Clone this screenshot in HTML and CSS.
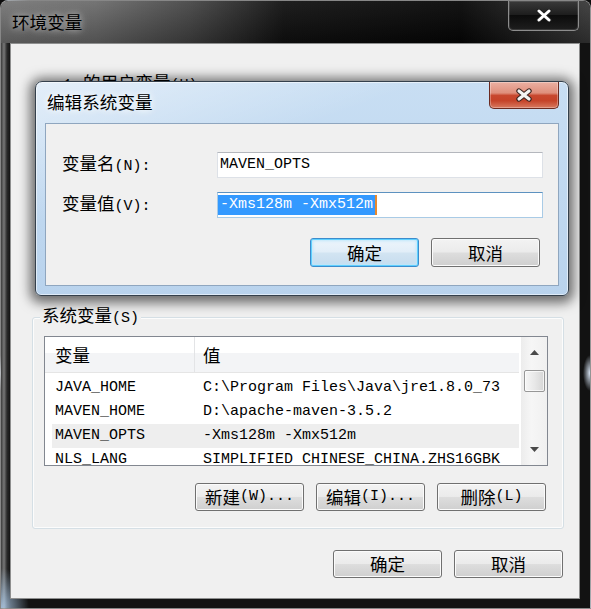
FILE: index.html
```html
<!DOCTYPE html>
<html lang="zh-CN">
<head>
<meta charset="utf-8">
<title>环境变量</title>
<link rel="stylesheet" href="styles.css">
</head>
<body>
<div class="win">
  <div class="wbar">
    <div class="wtitle z">环境变量</div>
    <div class="wclose">
      <svg width="16" height="13" viewBox="0 0 16 13"><path d="M3 2 L13 11 M13 2 L3 11" stroke="#202020" stroke-width="5" stroke-linecap="round"/><path d="M3 2 L13 11 M13 2 L3 11" stroke="#ffffff" stroke-width="3" stroke-linecap="round"/></svg>
    </div>
  </div>
  <div class="client">
    <div class="usersec"><span class="ulabel">1 <span class="z shift">的用户变量</span>(U)</span></div>
    <div class="group">
      <div class="glabel"><span class="z">系统变量</span>(S)</div>
      <div class="list">
        <div class="lmain">
          <div class="lhead">
            <div class="c1"><span class="z">变量</span></div>
            <div class="c2"><span class="z">值</span></div>
          </div>
          <div class="lbody">
            <div class="row"><div class="c1">JAVA_HOME</div><div class="c2">C:\Program Files\Java\jre1.8.0_73</div></div>
            <div class="row"><div class="c1">MAVEN_HOME</div><div class="c2">D:\apache-maven-3.5.2</div></div>
            <div class="row sel"><div class="c1">MAVEN_OPTS</div><div class="c2">-Xms128m -Xmx512m</div></div>
            <div class="row"><div class="c1">NLS_LANG</div><div class="c2">SIMPLIFIED CHINESE_CHINA.ZHS16GBK</div></div>
          </div>
        </div>
        <div class="sbar">
          <svg class="arr" width="9" height="5" viewBox="0 0 9 5"><path d="M0 5 L4.5 0 L9 5 Z" fill="#4a4a4a"/></svg>
          <div class="thumb"></div>
          <svg class="arr down" width="9" height="5" viewBox="0 0 9 5"><path d="M0 0 L4.5 5 L9 0 Z" fill="#4a4a4a"/></svg>
        </div>
      </div>
      <div class="btns">
        <div class="btn"><span class="z">新建</span>(W)...</div>
        <div class="btn"><span class="z">编辑</span>(I)...</div>
        <div class="btn"><span class="z">删除</span>(L)</div>
      </div>
    </div>
    <div class="btns main">
      <div class="btn"><span class="z">确定</span></div>
      <div class="btn"><span class="z">取消</span></div>
    </div>
  </div>
</div>

<div class="dlg">
  <div class="dtitle">
    <div class="dtext z">编辑系统变量</div>
    <div class="dclose">
      <svg width="18" height="14" viewBox="0 0 18 14"><path d="M4 3 L14 11 M14 3 L4 11" stroke="#3a2420" stroke-width="5.4" stroke-linecap="round"/><path d="M4 3 L14 11 M14 3 L4 11" stroke="#f4f4f4" stroke-width="3.2" stroke-linecap="round"/></svg>
    </div>
  </div>
  <div class="dclient">
    <div class="frow">
      <div class="flabel"><span class="z">变量名</span>(N):</div>
      <div class="input">MAVEN_OPTS</div>
    </div>
    <div class="frow second">
      <div class="flabel"><span class="z">变量值</span>(V):</div>
      <div class="input focus"><span class="selt">-Xms128m -Xmx512m</span><span class="caret"></span></div>
    </div>
    <div class="dbtns">
      <div class="btn def"><span class="z">确定</span></div>
      <div class="btn"><span class="z">取消</span></div>
    </div>
  </div>
</div>
</body>
</html>
```

FILE: styles.css
```css
* { box-sizing: border-box; }
html, body { margin: 0; padding: 0; }
body {
  width: 591px;
  height: 609px;
  overflow: hidden;
  position: relative;
  background: #0c0c0c;
  font-family: "Liberation Mono", "Noto Sans CJK SC", monospace;
  font-size: 15px;
  line-height: 20px;
  color: #000;
}
.z {
  font-family: "Noto Sans CJK SC", sans-serif;
  font-size: 17.5px;
  line-height: 20px;
}

/* outer window */
.win {
  width: 591px;
  height: 609px;
  display: flex;
  flex-direction: column;
  border: 1px solid rgba(175, 175, 175, 0.75);
  border-radius: 8px 8px 0 0;
  background:
    radial-gradient(7px 18px at 100% 372px, rgba(225, 238, 255, 0.95), rgba(225, 238, 255, 0)),
    radial-gradient(28px 40px at 0 100%, rgba(175, 205, 235, 0.85), rgba(175, 205, 235, 0)),
    linear-gradient(90deg, #3c3c3c 0, #777 3px, #2a2a2a 6px, #141414 9px, rgba(20, 20, 20, 0) 9px),
    #121212;
}
.wbar {
  height: 42px;
  flex-shrink: 0;
  display: flex;
  align-items: flex-start;
  border-radius: 7px 7px 0 0;
  background:
    linear-gradient(rgba(255, 255, 255, 0.06), rgba(0, 0, 0, 0.25)),
    linear-gradient(90deg, #777 0%, #6c6c6c 16%, #464646 32%, #111 48%, #060606 78%, #1d1d1d 88%, #3a3a3a 100%);
}
.wtitle {
  margin: 11px 0 0 11px;
  font-size: 17.6px;
  text-shadow: 0 0 6px rgba(255, 255, 255, 0.55), 0 0 12px rgba(255, 255, 255, 0.35);
}
.wclose {
  margin-left: auto;
  margin-right: 11px;
  width: 71px;
  height: 30px;
  border: 1px solid #8d8d8d;
  border-top: none;
  border-radius: 0 0 5px 5px;
  background: linear-gradient(#3a3a3a, #1c1c1c 50%, #0c0c0c 50%, #1e1e1e);
  box-shadow: inset 0 0 0 1px rgba(255, 255, 255, 0.12);
  display: flex;
  align-items: center;
  justify-content: center;
}
.client {
  flex: 1;
  margin: 0 10px 9px 9px;
  border: 1px solid #8e8f8f;
  background: #f0f0f0;
  display: flex;
  flex-direction: column;
}
.usersec {
  height: 273px;
  flex-shrink: 0;
  padding: 28px 0 0 52px;
}
.shift { margin-left: 2px; }

/* group box */
.group {
  margin: 0 15px 0 21px;
  border: 1px solid #d5dfe5;
  border-radius: 3px;
  box-shadow: inset 0 0 0 1px rgba(255, 255, 255, 0.8);
}
.glabel {
  width: fit-content;
  height: 20px;
  margin: -13px 0 1px 7px;
  padding: 0 2px;
  background: #f0f0f0;
  white-space: nowrap;
}
.list {
  margin: 11px 15px 0 11px;
  height: 130px;
  border: 1px solid #828790;
  background: #fff;
  display: flex;
}
.lmain {
  flex: 1;
  min-width: 0;
  overflow: hidden;
}
.lhead {
  height: 36px;
  display: flex;
  border-bottom: 1px solid #e5e5e5;
  background: linear-gradient(#fff 0, #fff 45%, #f3f4f6 45%, #f3f4f6 100%);
  margin-right: 2px;
}
.lhead .c1 {
  width: 150px;
  padding-left: 10px;
  border-right: 1px solid #e3e4e6;
  display: flex;
  align-items: center;
}
.lhead .c2 {
  padding-left: 8px;
  display: flex;
  align-items: center;
}
.lbody { padding-top: 3px; }
.row {
  height: 24px;
  margin: 0 2px 0 7px;
  display: flex;
  align-items: center;
  white-space: nowrap;
}
.row .c1 { width: 142px; padding-left: 3px; flex-shrink: 0; }
.row .c2 { padding-left: 9px; }
.row.sel { background: #eeeeee; }

.sbar {
  width: 26px;
  flex-shrink: 0;
  background: linear-gradient(90deg, #ececec, #f6f6f6 40%, #f0f0f0);
  display: flex;
  flex-direction: column;
  align-items: center;
  padding: 13px 0 13px 0;
}
.thumb {
  margin-top: 15px;
  width: 21px;
  height: 22px;
  border: 1px solid #979797;
  border-radius: 2px;
  background: linear-gradient(90deg, #f6f6f6, #e8e8e8 50%, #d6d6d6);
  box-shadow: inset 0 0 0 1px rgba(255, 255, 255, 0.7);
}
.arr { display: block; }
.arr.down { margin-top: auto; }

/* buttons */
.btns {
  display: flex;
  justify-content: flex-end;
  gap: 12px;
  margin: 17px 17px 17px 0;
}
.btns.main { margin: 21px 16px 0 0; }
.btn {
  width: 109px;
  height: 28px;
  border: 1px solid #707070;
  border-radius: 3px;
  background: linear-gradient(#f3f3f3 0%, #ebebeb 48%, #dddddd 52%, #cfcfcf 100%);
  box-shadow: inset 0 0 0 1px #fbfbfb;
  display: flex;
  align-items: center;
  justify-content: center;
  white-space: nowrap;
}

/* edit dialog */
.dlg {
  position: absolute;
  left: 35px;
  top: 81px;
  width: 534px;
  height: 215px;
  border: 1px solid #34404c;
  border-radius: 7px 7px 6px 6px;
  padding: 0 9px 9px 9px;
  display: flex;
  flex-direction: column;
  background:
    linear-gradient(160deg, rgba(255, 255, 255, 0.5) 0%, rgba(255, 255, 255, 0) 35%),
    linear-gradient(#c8def3, #b9d3ed);
  box-shadow: inset 0 0 0 1px rgba(255, 255, 255, 0.55), 0 2px 12px 5px rgba(0, 0, 0, 0.55);
}
.dtitle {
  height: 41px;
  flex-shrink: 0;
  display: flex;
  align-items: flex-start;
}
.dtext {
  margin: 10px 0 0 2px;
  font-size: 17.6px;
  text-shadow: 0 0 6px rgba(255, 255, 255, 0.9), 0 0 10px rgba(255, 255, 255, 0.7);
}
.dclose {
  margin-left: auto;
  width: 70px;
  height: 27px;
  border: 1px solid #6b2a20;
  border-top: none;
  border-radius: 0 0 5px 5px;
  background: linear-gradient(#eab0a2 0%, #df8f7c 42%, #c8472e 52%, #c54329 72%, #d87a60 100%);
  box-shadow: inset 0 0 0 1px rgba(255, 255, 255, 0.3);
  display: flex;
  align-items: center;
  justify-content: center;
}
.dclient {
  flex: 1;
  border: 1px solid #8fa6bf;
  background: #f0f0f0;
  padding: 28px 15px 0 16px;
  display: flex;
  flex-direction: column;
}
.frow {
  height: 26px;
  display: flex;
  align-items: center;
}
.frow.second { margin-top: 14px; }
.flabel { width: 155px; white-space: nowrap; }
.input {
  flex: 1;
  height: 26px;
  background: #fff;
  border: 1px solid #dde1e7;
  border-top-color: #b4b7bd;
  padding-left: 2px;
  display: flex;
  align-items: center;
  white-space: nowrap;
}
.input.focus {
  border-color: #a9cbe6;
  border-top-color: #5d92c0;
  padding-left: 0;
}
.selt {
  background: #3399ff;
  color: #fff;
  padding: 0 2px;
  line-height: 20px;
}
.caret {
  display: inline-block;
  width: 2px;
  height: 20px;
  background: #e8892e;
}
.dbtns {
  display: flex;
  justify-content: flex-end;
  gap: 12px;
  margin: 20px 3px 0 0;
}
.dbtns .btn { height: 29px; }
.btn.def {
  border-color: #3c8ccc;
  background: linear-gradient(#edf5fb 0%, #e2eef8 48%, #d2e4f2 52%, #c6dcee 100%);
  box-shadow: inset 0 0 0 1px #5fd0ff, inset 0 0 3px 2px #bfe6fa;
}
```
